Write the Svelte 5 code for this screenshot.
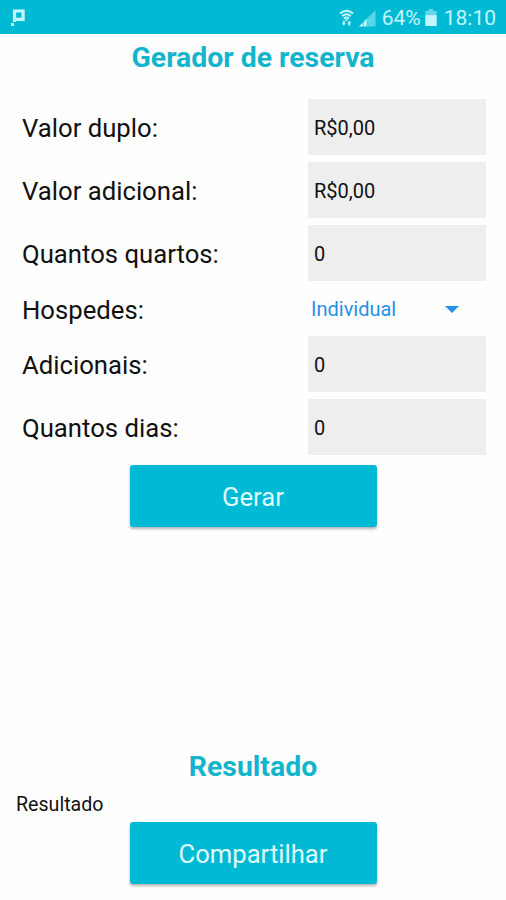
<script>
	let campos = [
		{ id: 'duplo', label: 'Valor duplo:', valor: 'R$0,00' },
		{ id: 'adicional', label: 'Valor adicional:', valor: 'R$0,00' },
		{ id: 'quartos', label: 'Quantos quartos:', valor: '0' },
		{ id: 'hospedes', label: 'Hospedes:', valor: 'Individual', opcoes: ['Individual', 'Duplo', 'Triplo'] },
		{ id: 'adicionais', label: 'Adicionais:', valor: '0' },
		{ id: 'dias', label: 'Quantos dias:', valor: '0' }
	];

	let resultado = 'Resultado';

	function gerar() {
		resultado = campos.map(c => c.label + ' ' + c.valor).join(', ');
	}

	function compartilhar() {
		if (navigator.share) {
			navigator.share({ text: resultado });
		}
	}
</script>

<div class="tela">
	<header class="status">
		<svg class="notificacao" width="16" height="20" viewBox="0 0 16 20">
			<path d="M4.5 14V3h8.6v8.4H4.5" fill="none" stroke="currentColor" stroke-width="3.2" />
			<rect x="1" y="15" width="3" height="3" fill="currentColor" />
		</svg>
		<div class="indicadores">
			<svg class="wifi" width="15" height="20" viewBox="0 0 16 20">
				<g fill="none" stroke="currentColor" stroke-width="2">
					<path d="M1 5.2Q8-.8 15 5.2" />
					<path d="M3.3 8Q8 4 12.7 8" />
					<path d="M5.3 10.6Q8 8.3 10.7 10.6" />
				</g>
				<path d="M6.5 12L8 10.5 9.5 12 8 13.5zM3 15.5h1.2V13h2v2.5h1.2L5.2 18zM8.8 15.5L11 13l2.2 2.5H12V18h-2v-2.5z" fill="currentColor" />
			</svg>
			<svg class="sinal" width="17" height="17" viewBox="0 0 18 18">
				<path d="M0 17.5L17.5 0v17.5z" fill="currentColor" opacity=".45" />
				<path d="M0 17.5L4 13.5v4zM5.2 12.2l2.6-2.6v7.9H5.2z" fill="currentColor" />
			</svg>
			<span class="bateria-texto">64%</span>
			<svg class="bateria" width="12" height="17" viewBox="0 0 12 18">
				<path d="M3.5 0h5v2H12v5H0V2h3.5z" fill="currentColor" opacity=".5" />
				<path d="M0 6.5h12V18H0z" fill="currentColor" />
			</svg>
			<span class="hora">18:10</span>
		</div>
	</header>

	<h1>Gerador de reserva</h1>

	<div class="formulario">
		{#each campos as campo}
			<div class="linha" class:baixa={campo.opcoes}>
				<label for={campo.id}>{campo.label}</label>
				{#if campo.opcoes}
					<div class="selecao">
						<select id={campo.id} bind:value={campo.valor}>
							{#each campo.opcoes as opcao}
								<option>{opcao}</option>
							{/each}
						</select>
						<svg width="14" height="7" viewBox="0 0 14 7"><path d="M0 0h14L7 7z" fill="currentColor" /></svg>
					</div>
				{:else}
					<input id={campo.id} type="text" bind:value={campo.valor}>
				{/if}
			</div>
		{/each}
	</div>

	<button on:click={gerar}>Gerar</button>

	<div class="rodape">
		<h2>Resultado</h2>
		<p>{resultado}</p>
		<button on:click={compartilhar}>Compartilhar</button>
	</div>
</div>

<style>
	:global(body) {
		margin: 0;
		background: #fefefe;
	}

	.tela {
		box-sizing: border-box;
		height: 900px;
		display: flex;
		flex-direction: column;
		font-family: Roboto, sans-serif;
		color: #111;
		padding-bottom: 16px;
	}

	.status {
		box-sizing: border-box;
		height: 34px;
		flex: none;
		display: flex;
		align-items: center;
		justify-content: space-between;
		padding: 1px 10px 0;
		background: #00bad5;
		color: #c4f6fb;
	}

	.indicadores {
		display: flex;
		align-items: center;
		font-size: 21px;
	}

	.sinal {
		margin: 2px 6px 0 5px;
	}

	.bateria {
		margin: 0 7px 0 4px;
	}

	h1,
	h2 {
		margin: 0;
		text-align: center;
		font-size: 28.4px;
		line-height: 32px;
		font-weight: 700;
		color: #12b5cb;
	}

	h1 {
		margin-top: 8px;
	}

	.formulario {
		margin: 21px 20px 0 22px;
	}

	.linha {
		height: 63.3px;
		display: flex;
		align-items: center;
		justify-content: space-between;
	}

	.linha.baixa {
		height: 47.3px;
	}

	label {
		padding-top: 2px;
		font-size: 25.7px;
	}

	input,
	.selecao {
		box-sizing: border-box;
		width: 178px;
	}

	input {
		height: 56px;
		border: 0;
		border-radius: 1px;
		padding: 2px 6px 0;
		background: #eee;
		color: #111;
		font: 20px Roboto, sans-serif;
	}

	.selecao {
		display: flex;
		align-items: center;
		justify-content: space-between;
		padding: 1px 27px 0 3px;
		color: #2592e6;
	}

	select {
		appearance: none;
		border: 0;
		padding: 0;
		background: none;
		color: inherit;
		font: 20px Roboto, sans-serif;
	}

	button {
		flex: none;
		display: block;
		width: 247px;
		height: 62px;
		margin: 6px auto 0;
		padding: 2px 0 0;
		border: 0;
		border-radius: 3px;
		background: #00bad5;
		color: #dffbfd;
		font: 25.6px Roboto, sans-serif;
		box-shadow: 0 2px 3px rgba(0, 0, 0, .3);
	}

	.rodape {
		margin-top: auto;
	}

	p {
		margin: 10px 16px -1px;
		font-size: 19.6px;
		line-height: 24px;
	}
</style>
